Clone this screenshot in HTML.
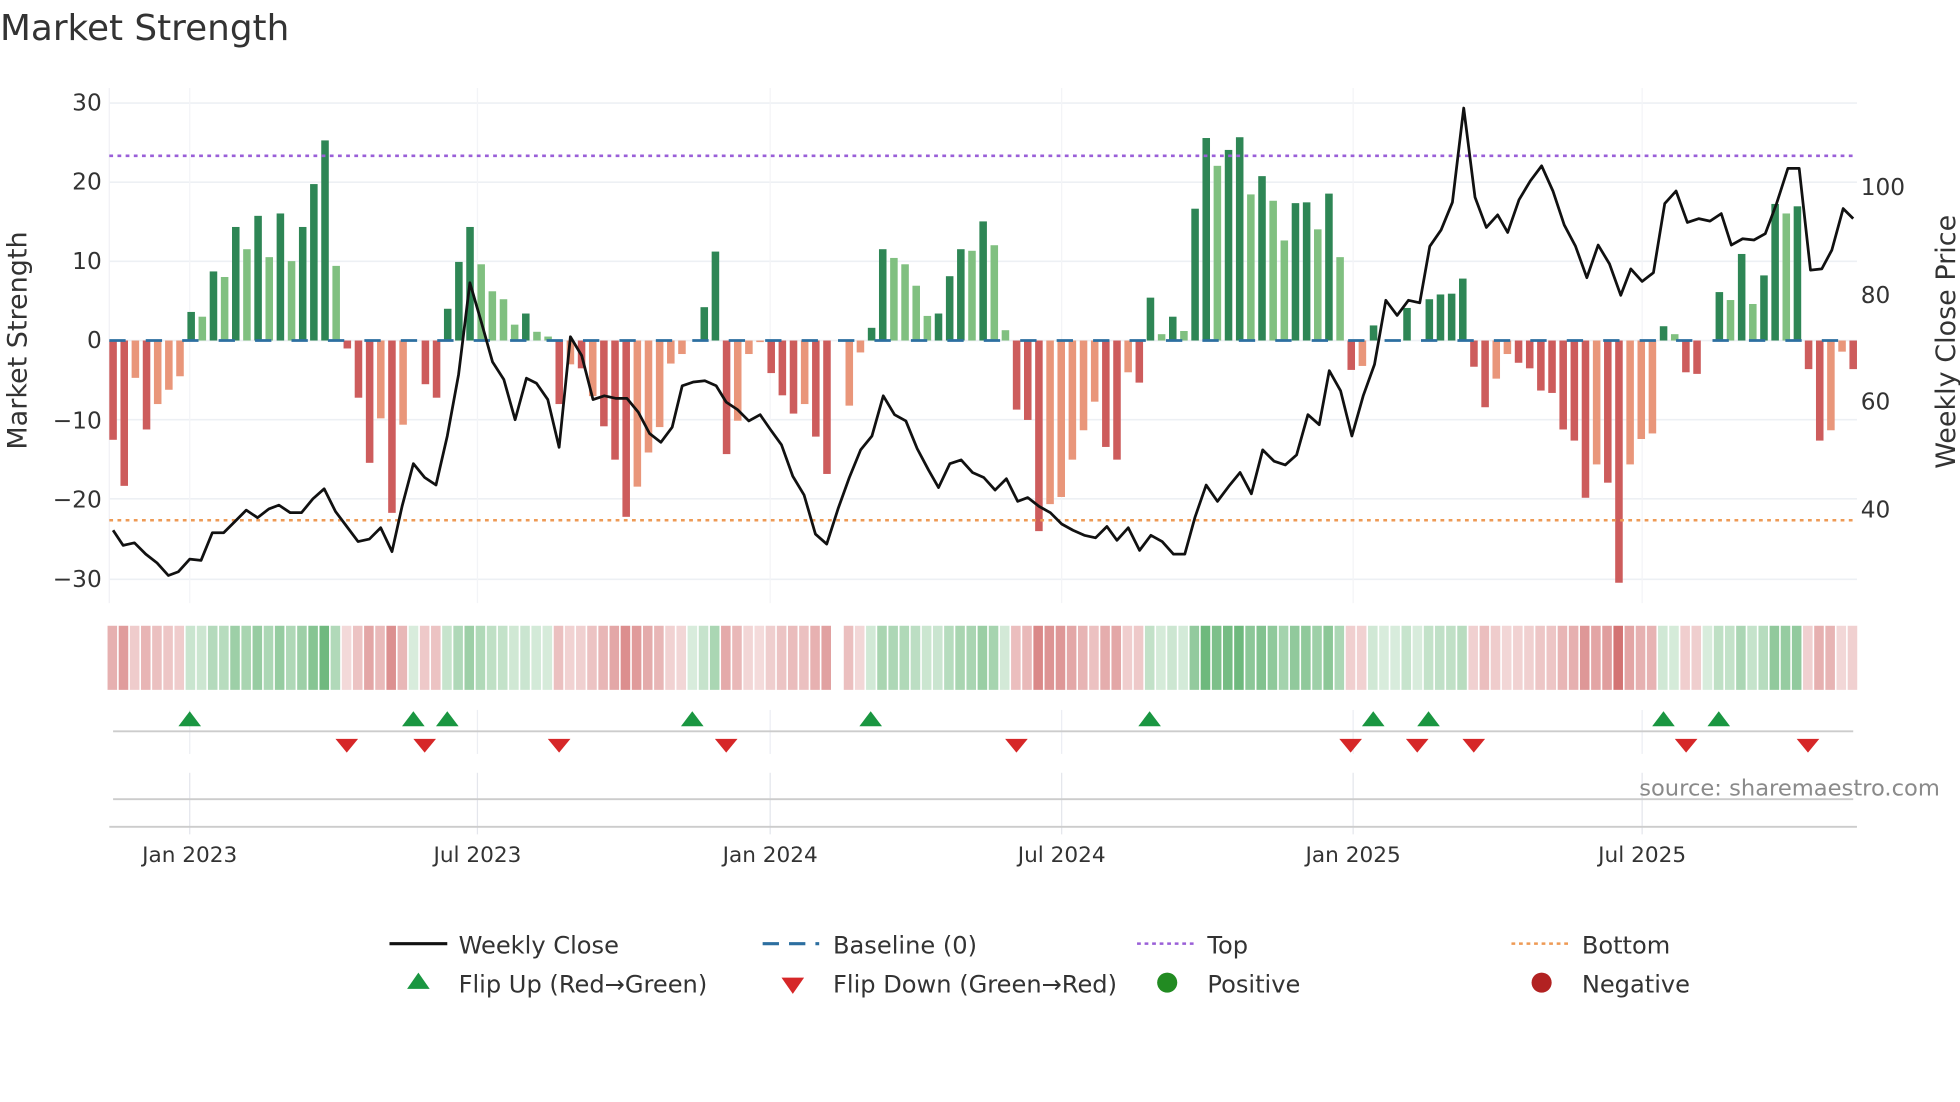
<!DOCTYPE html>
<html><head><meta charset="utf-8"><style>
html,body{margin:0;padding:0;background:#fff;width:1960px;height:1102px;overflow:hidden}
svg{display:block}
text{font-family:"DejaVu Sans","Liberation Sans",sans-serif;fill:#333}
</style></head><body>
<svg id="s" width="1960" height="1102" viewBox="0 0 1560 877" preserveAspectRatio="none" xmlns="http://www.w3.org/2000/svg">
<rect width="1560" height="877" fill="#fff"/>
<text x="0" y="32" font-size="28.5">Market Strength</text>
<g id="grid"></g>
<g font-size="18.5" text-anchor="end">
<text x="81" y="88">30</text><text x="81" y="151">20</text><text x="81" y="214">10</text>
<text x="81" y="277">0</text><text x="81" y="341">−10</text><text x="81" y="404">−20</text><text x="81" y="467">−30</text>
</g>
<g font-size="18.5">
<text x="1481" y="155">100</text><text x="1481" y="241">80</text><text x="1481" y="326">60</text><text x="1481" y="412">40</text>
</g>
<text transform="translate(21,271) rotate(-90)" font-size="21.5" text-anchor="middle">Market Strength</text>
<text transform="translate(1556,272) rotate(-90)" font-size="21.5" text-anchor="middle">Weekly Close Price</text>
<g id="bars"></g>
<line x1="87" x2="1478" y1="271" y2="271" stroke="#2c6fa0" stroke-width="2.2" stroke-dasharray="13,16"/>
<line x1="87" x2="1478" y1="124" y2="124" stroke="#9a5fd8" stroke-width="2" stroke-dasharray="3,3.5"/>
<line x1="87" x2="1478" y1="414" y2="414" stroke="#ee9a55" stroke-width="2" stroke-dasharray="3,3.5"/>
<polyline id="price" fill="none" stroke="#111" stroke-width="2.2" stroke-linejoin="round"/>
<g id="heat"></g>
<line x1="90" x2="1475" y1="582" y2="582" stroke="#ccc" stroke-width="1.5"/>
<line x1="90" x2="1475" y1="636" y2="636" stroke="#ccc" stroke-width="1.5"/>
<line x1="87" x2="1478" y1="658" y2="658" stroke="#ccc" stroke-width="1.5"/>
<g id="marks"></g>
<text x="1544" y="633" font-size="18" text-anchor="end" style="fill:#8a8a8a">source: sharemaestro.com</text>
<g font-size="17.2" text-anchor="middle">
<text x="151" y="686">Jan 2023</text><text x="380" y="686">Jul 2023</text><text x="613" y="686">Jan 2024</text>
<text x="845" y="686">Jul 2024</text><text x="1077" y="686">Jan 2025</text><text x="1307" y="686">Jul 2025</text>
</g>
<g font-size="19.2">
<line x1="310" x2="356" y1="751" y2="751" stroke="#111" stroke-width="2.5"/>
<text x="365" y="759">Weekly Close</text>
<line x1="607" x2="652" y1="751" y2="751" stroke="#2c6fa0" stroke-width="2.5" stroke-dasharray="13,8"/>
<text x="663" y="759">Baseline (0)</text>
<line x1="905" x2="950" y1="751" y2="751" stroke="#9a5fd8" stroke-width="2" stroke-dasharray="3,3"/>
<text x="961" y="759">Top</text>
<line x1="1203" x2="1248" y1="751" y2="751" stroke="#ee9a55" stroke-width="2" stroke-dasharray="3,3"/>
<text x="1259" y="759">Bottom</text>
<polygon points="333,774 342,787 324,787" fill="#1a9641"/>
<text x="365" y="790">Flip Up (Red→Green)</text>
<polygon points="622,778 640,778 631,791" fill="#d62728"/>
<text x="663" y="790">Flip Down (Green→Red)</text>
<circle cx="929" cy="782" r="8" fill="#228b22"/>
<text x="961" y="790">Positive</text>
<circle cx="1227" cy="782" r="8" fill="#b22222"/>
<text x="1259" y="790">Negative</text>
</g>
</svg>
<script>
var NS="http://www.w3.org/2000/svg";
function el(p,t,a){var e=document.createElementNS(NS,t);for(var k in a)e.setAttribute(k,a[k]);document.getElementById(p).appendChild(e);return e;}
var V=[[-12.5,1],[-18.3,1],[-4.7,0],[-11.2,1],[-8,0],[-6.2,0],[-4.5,0],[3.6,1],[3,0],[8.7,1],[8,0],[14.3,1],[11.5,0],[15.7,1],[10.5,0],[16,1],[10,0],[14.3,1],[19.7,1],[25.2,1],[9.4,0],[-1,1],[-7.2,1],[-15.4,1],[-9.8,0],[-21.7,1],[-10.6,0],[0,0],[-5.5,1],[-7.2,1],[4,1],[9.9,1],[14.3,1],[9.6,0],[6.2,0],[5.2,0],[2,0],[3.4,1],[1.1,0],[0.5,0],[-8,1],[-3,0],[-3.5,1],[-7,0],[-10.8,1],[-15,1],[-22.2,1],[-18.4,0],[-14.1,0],[-10.9,0],[-2.9,0],[-1.7,0],[0,0],[4.2,1],[11.2,1],[-14.3,1],[-10.1,0],[-1.7,0],[-0.2,0],[-4.1,1],[-6.9,1],[-9.2,1],[-8,0],[-12.1,1],[-16.8,1],[0,0],[-8.2,0],[-1.5,0],[1.6,1],[11.5,1],[10.4,0],[9.6,0],[6.9,0],[3.1,0],[3.4,1],[8.1,1],[11.5,1],[11.3,0],[15,1],[12,0],[1.3,0],[-8.7,1],[-10,1],[-24,1],[-20.6,0],[-19.7,0],[-15,0],[-11.3,0],[-7.7,0],[-13.4,1],[-15,1],[-4,0],[-5.3,1],[5.4,1],[0.8,0],[3,1],[1.2,0],[16.6,1],[25.5,1],[22,0],[24,1],[25.6,1],[18.4,0],[20.7,1],[17.6,0],[12.6,0],[17.3,1],[17.4,1],[14,0],[18.5,1],[10.5,0],[-3.7,1],[-3.2,0],[1.9,1],[0,0],[0,0],[4.1,1],[0,0],[5.2,1],[5.8,1],[5.9,1],[7.8,1],[-3.3,1],[-8.4,1],[-4.8,0],[-1.7,0],[-2.8,1],[-3.5,1],[-6.3,1],[-6.6,1],[-11.2,1],[-12.6,1],[-19.8,1],[-15.6,0],[-17.9,1],[-30.5,1],[-15.6,0],[-12.4,0],[-11.7,0],[1.8,1],[0.8,0],[-4,1],[-4.2,1],[0,0],[6.1,1],[5.1,0],[10.9,1],[4.6,0],[8.2,1],[17.2,1],[16,0],[16.9,1],[-3.6,1],[-12.6,1],[-11.3,0],[-1.4,0],[-3.6,1]];
var n=V.length,x0=90,dx=(1475-90)/(n-1);
[82,145,208,271,334,397,461].forEach(function(y){el("grid","line",{x1:87,x2:1478,y1:y,y2:y,stroke:"#edf0f4","stroke-width":1.3});});
[151,380,613,845,1077,1307].forEach(function(x){el("grid","line",{x1:x,x2:x,y1:70,y2:480,stroke:"#f3f4f7","stroke-width":1});
el("grid","line",{x1:x,x2:x,y1:565,y2:600,stroke:"#eceef3","stroke-width":1});el("grid","line",{x1:x,x2:x,y1:615,y2:664,stroke:"#e4e6ec","stroke-width":1});});
el("grid","line",{x1:87,x2:87,y1:70,y2:480,stroke:"#f1f2f5","stroke-width":1});
V.forEach(function(d,i){var v=d[0],x=x0+i*dx;if(v==0)return;var y=271-v*6.32;
var c=v>0?(d[1]?"#2e8655":"#80c080"):(d[1]?"#cd5c5c":"#e9967a");
el("bars","rect",{x:x-3,y:Math.min(y,271),width:6,height:Math.abs(271-y),fill:c});
});
V.forEach(function(d,i){var v=d[0],x=x0+i*dx;if(i==65)return;
var c=v>=0?"rgba(60,160,80,"+(0.2+0.55*Math.min(Math.abs(v),26)/26)+")":"rgba(200,80,80,"+(0.2+0.6*Math.min(Math.abs(v),30)/30)+")";
el("heat","rect",{x:x-4.4,y:498,width:7.6,height:51,fill:c});});
var P=[[90,422],[98,434],[107,432],[116,441],[125,448],[134,458],[142,455],[151,445],[160,446],[169,424],[178,424],[187,415],[196,406],[205,412],[214,405],[222,402],[231,408],[240,408],[249,397],[258,389],[267,407],[276,419],[285,431],[294,429],[303,420],[312,439],[320,403],[329,369],[338,380],[347,386],[356,347],[365,298],[374,225],[383,256],[392,288],[401,302],[410,334],[419,301],[427,305],[436,318],[445,356],[454,268],[463,283],[472,318],[481,315],[490,317],[499,317],[508,328],[517,345],[526,352],[535,340],[543,307],[552,304],[561,303],[570,307],[578,320],[587,326],[596,335],[605,330],[614,343],[622,354],[631,379],[640,394],[649,425],[658,433],[667,405],[676,380],[685,358],[694,347],[703,315],[712,330],[721,335],[730,357],[739,374],[747,388],[756,369],[765,366],[774,376],[783,380],[792,390],[801,381],[810,399],[818,396],[827,403],[836,408],[845,417],[854,422],[863,426],[872,428],[881,419],[889,430],[898,420],[907,438],[916,426],[925,431],[934,441],[943,441],[951,412],[960,386],[969,399],[978,387],[987,376],[996,393],[1005,358],[1014,367],[1023,370],[1032,362],[1041,330],[1050,338],[1058,295],[1067,311],[1076,347],[1085,315],[1094,290],[1103,239],[1112,251],[1121,239],[1130,241],[1138,196],[1147,183],[1156,161],[1165,86],[1174,157],[1183,181],[1192,171],[1200,185],[1209,159],[1218,144],[1227,132],[1236,152],[1245,179],[1254,196],[1263,221],[1272,195],[1281,210],[1290,235],[1298,214],[1307,224],[1316,217],[1325,162],[1334,152],[1343,177],[1352,174],[1361,176],[1370,170],[1378,195],[1387,190],[1396,191],[1405,186],[1414,162],[1423,134],[1432,134],[1441,215],[1450,214],[1458,199],[1467,166],[1475,174]];
document.getElementById("price").setAttribute("points",P.map(function(p){return p.join(",")}).join(" "));
[151,329,356,551,693,915,1093,1137,1324,1368].forEach(function(x){el("marks","polygon",{points:(x)+",566 "+(x+9)+",578 "+(x-9)+",578",fill:"#1a9641"});});
[276,338,445,578,809,1075,1128,1173,1342,1439].forEach(function(x){el("marks","polygon",{points:(x-9)+",588 "+(x+9)+",588 "+x+",599",fill:"#d62728"});});
</script>
</body></html>
